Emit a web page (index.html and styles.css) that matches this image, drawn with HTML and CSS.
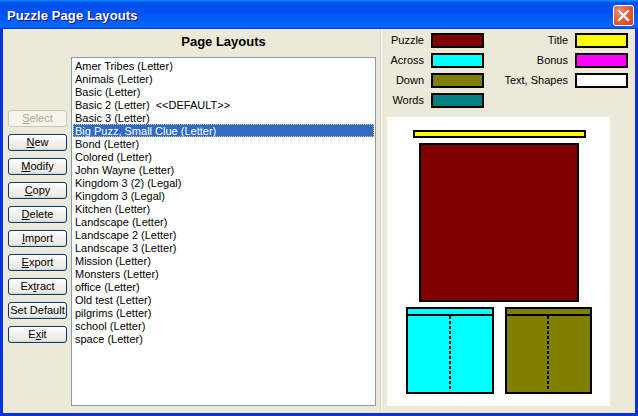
FILE: index.html
```html
<!DOCTYPE html>
<html>
<head>
<meta charset="utf-8">
<title>Puzzle Page Layouts</title>
<link rel="stylesheet" href="styles.css">
</head>
<body>
<div class="window">
  <div class="titlebar">
    <span class="title">Puzzle Page Layouts</span>
    <div class="close">
      <svg width="13" height="13" viewBox="0 0 13 13"><path d="M2 2 L11 11 M11 2 L2 11" stroke="#fff" stroke-width="2.2" stroke-linecap="square" fill="none"/></svg>
    </div>
  </div>
  <div class="client">
    <div class="buttons">
      <button class="btn" disabled><u>S</u>elect</button>
      <button class="btn"><u>N</u>ew</button>
      <button class="btn"><u>M</u>odify</button>
      <button class="btn"><u>C</u>opy</button>
      <button class="btn"><u>D</u>elete</button>
      <button class="btn"><u>I</u>mport</button>
      <button class="btn"><u>E</u>xport</button>
      <button class="btn">Ex<u>t</u>ract</button>
      <button class="btn">Set Default</button>
      <button class="btn">E<u>x</u>it</button>
    </div>
    <div class="listpane">
      <h1 class="heading">Page Layouts</h1>
      <ul class="list">
        <li>Amer Tribes (Letter)</li>
        <li>Animals (Letter)</li>
        <li>Basic (Letter)</li>
        <li>Basic 2 (Letter)  &lt;&lt;DEFAULT&gt;&gt;</li>
        <li>Basic 3 (Letter)</li>
        <li class="selected">Big Puzz, Small Clue (Letter)</li>
        <li>Bond (Letter)</li>
        <li>Colored (Letter)</li>
        <li>John Wayne (Letter)</li>
        <li>Kingdom 3 (2) (Legal)</li>
        <li>Kingdom 3 (Legal)</li>
        <li>Kitchen (Letter)</li>
        <li>Landscape (Letter)</li>
        <li>Landscape 2 (Letter)</li>
        <li>Landscape 3 (Letter)</li>
        <li>Mission (Letter)</li>
        <li>Monsters (Letter)</li>
        <li>office (Letter)</li>
        <li>Old test (Letter)</li>
        <li>pilgrims (Letter)</li>
        <li>school (Letter)</li>
        <li>space (Letter)</li>
      </ul>
    </div>
    <div class="splitter"></div>
    <div class="rightpane">
      <div class="legend">
        <span class="label">Puzzle</span><span class="swatch sw-puzzle"></span>
        <span class="label">Title</span><span class="swatch sw-title"></span>
        <span class="label">Across</span><span class="swatch sw-across"></span>
        <span class="label">Bonus</span><span class="swatch sw-bonus"></span>
        <span class="label">Down</span><span class="swatch sw-down"></span>
        <span class="label">Text, Shapes</span><span class="swatch sw-text"></span>
        <span class="label">Words</span><span class="swatch sw-words"></span>
      </div>
      <div class="preview">
        <svg width="223" height="289" viewBox="0 0 223 289">
          <rect x="27" y="14" width="171" height="6" fill="#ffff00" stroke="#000" stroke-width="2"/>
          <rect x="33" y="27" width="158" height="157" fill="#800000" stroke="#000" stroke-width="2"/>
          <rect x="20" y="191" width="86" height="85" fill="#00ffff" stroke="#000" stroke-width="2"/>
          <line x1="20" y1="198" x2="106" y2="198" stroke="#000" stroke-width="2"/>
          <line x1="63" y1="199" x2="63" y2="273" stroke="#000" stroke-width="2" stroke-dasharray="3 2"/>
          <rect x="119" y="191" width="85" height="85" fill="#808000" stroke="#000" stroke-width="2"/>
          <line x1="119" y1="198" x2="204" y2="198" stroke="#000" stroke-width="2"/>
          <line x1="161" y1="199" x2="161" y2="273" stroke="#000" stroke-width="2" stroke-dasharray="3 2"/>
        </svg>
      </div>
    </div>
  </div>
</div>
</body>
</html>
```

FILE: styles.css
```css
* { box-sizing: border-box; }
html, body { margin: 0; padding: 0; }
body {
  width: 638px;
  height: 416px;
  overflow: hidden;
  font-family: "Liberation Sans", Arial, sans-serif;
  font-size: 11px;
  color: #000;
  background: #0831d9;
}
.window {
  width: 638px;
  height: 416px;
  display: flex;
  flex-direction: column;
  background: #0831d9;
}
.titlebar {
  flex: none;
  height: 29px;
  padding: 2px 4px 0 7px;
  display: flex;
  align-items: center;
  background: linear-gradient(180deg, #0997ff 0%, #0053ee 8%, #0050ee 40%, #0066ff 88%, #0066ff 93%, #005bff 95%, #003dd7 96%, #003dd7 100%);
}
.title {
  flex: 1;
  color: #fff;
  font-weight: bold;
  font-size: 13px;
  text-shadow: 1px 1px #0f1089;
  letter-spacing: 0.1px;
}
.close {
  width: 21px;
  height: 21px;
  border: 1px solid #fff;
  border-radius: 3px;
  background: radial-gradient(circle at 30% 30%, #f0906c 0%, #e3603a 45%, #cc4418 100%);
  display: flex;
  align-items: center;
  justify-content: center;
}
.close svg { display: block; }
.client {
  flex: 1;
  margin: 0 3px 3px 3px;
  background: #ece9d8;
  display: flex;
}
.buttons {
  width: 68px;
  flex: none;
  padding: 81px 0 0 5px;
  display: flex;
  flex-direction: column;
  gap: 7px;
}
.btn {
  width: 59px;
  height: 17px;
  padding: 0;
  margin: 0;
  border: 1px solid #003c74;
  border-radius: 3px;
  background: linear-gradient(180deg, #ffffff 0%, #f4f3ee 40%, #ecebe6 86%, #d6d0c5 100%);
  font-family: "Liberation Sans", Arial, sans-serif;
  font-size: 11px;
  line-height: 15px;
  color: #000;
  text-align: center;
  white-space: nowrap;
}
.btn u { text-decoration: underline; }
.btn:disabled {
  border-color: #c9c7ba;
  background: #f5f4ea;
  color: #aca899;
}
.listpane {
  width: 305px;
  flex: none;
  display: flex;
  flex-direction: column;
}
.heading {
  margin: 0;
  height: 28px;
  line-height: 26px;
  text-align: center;
  font-size: 13px;
  font-weight: bold;
}
.list {
  list-style: none;
  margin: 0;
  padding: 1px;
  height: 349px;
  border: 1px solid #7f9db9;
  background: #fff;
}
.list li {
  height: 13px;
  line-height: 12px;
  padding-top: 1px;
  padding-left: 2px;
  white-space: pre;
}
.list li.selected {
  background: #316ac5;
  color: #fff;
  outline: 1px dotted #e8c47f;
  outline-offset: -1px;
}
.splitter {
  flex: none;
  width: 2px;
  margin: 1px 0 3px 4px;
  border-left: 1px solid #d8d4c4;
  border-right: 1px solid #fff;
}
.rightpane {
  flex: 1;
  padding-top: 4px;
}
.legend {
  display: grid;
  grid-template-columns: 42px 53px 77px 53px;
  grid-auto-rows: 15px;
  column-gap: 7px;
  row-gap: 5px;
}
.label {
  text-align: right;
  line-height: 15px;
  white-space: nowrap;
}
.swatch { border: 2px solid #000; }
.sw-puzzle { background: #800000; }
.sw-title { background: #ffff00; }
.sw-across { background: #00ffff; }
.sw-bonus { background: #ff00ff; }
.sw-down { background: #808000; }
.sw-text { background: #ffffff; }
.sw-words { background: #008080; }
.preview {
  margin: 9px 0 0 5px;
  width: 223px;
  height: 289px;
  background: #fff;
}
.preview svg { display: block; }
```
